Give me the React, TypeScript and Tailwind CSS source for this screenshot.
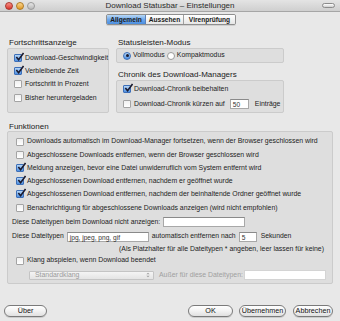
import React from 'react';

const font = { fontFamily: '"Liberation Sans", Arial, sans-serif' };

function Check({ on }: { on?: boolean }) {
  return on ? (
    <span className="relative w-[8px] h-[8px] shrink-0 rounded-[1px] border border-[#3d6fb8] bg-gradient-to-b from-[#b5d6f7] to-[#4c8ee0]">
      <svg viewBox="0 0 10 10" className="absolute -top-[3px] left-0 w-[9px] h-[9px]">
        <path d="M1.5 5.5 L4 8.5 L9.5 1" fill="none" stroke="#1a1a2e" strokeWidth="1.8" />
      </svg>
    </span>
  ) : (
    <span className="w-[8px] h-[8px] shrink-0 rounded-[1px] border border-[#a4a4a4] bg-gradient-to-b from-[#f0f0f0] to-white" />
  );
}

function Row({ on, children }: { on?: boolean; children: React.ReactNode }) {
  return (
    <div className="flex items-center gap-[3px] h-[13.4px] text-[6.9px] text-[#222] whitespace-nowrap">
      <Check on={on} />
      <span>{children}</span>
    </div>
  );
}

function Field({ w, value }: { w: string; value?: string }) {
  return (
    <span className={`${w} h-[10px] bg-white border border-[#a8a8a8] border-t-[#8a8a8a] text-[6.6px] leading-[9px] px-[2px] text-[#333]`}>{value}</span>
  );
}

function Btn({ w, children }: { w: string; children: React.ReactNode }) {
  return (
    <div className={`${w} h-[12px] rounded-full border border-[#7a7a7a] bg-gradient-to-b from-white via-[#f2f2f2] to-[#e0e0e0] flex items-center justify-center text-[7.2px] text-[#111] shadow-[0_1px_0_rgba(0,0,0,0.12)]`}>
      {children}
    </div>
  );
}

export default function App() {
  return (
    <div className="w-[340px] h-[321px] bg-[#e8e8e8] flex flex-col overflow-hidden" style={font}>
      {/* title bar */}
      <div className="relative h-[12px] bg-gradient-to-b from-[#e4e4e4] to-[#cfcfcf] border-b border-[#a6a6a6] flex items-center justify-center">
        <div className="absolute left-[5px] top-[2px] flex gap-[3px]">
          <span className="w-[8px] h-[8px] rounded-full bg-gradient-to-b from-[#f98f86] to-[#d8302b] border border-[#a8382f]" />
          <span className="w-[8px] h-[8px] rounded-full bg-gradient-to-b from-[#fbd68a] to-[#e09a1e] border border-[#b07a22]" />
          <span className="w-[8px] h-[8px] rounded-full bg-gradient-to-b from-[#e8e8e8] to-[#b8b8b8] border border-[#9a9a9a]" />
        </div>
        <span className="text-[8px] leading-[10px] text-[#2a2a2a]">Download Statusbar – Einstellungen</span>
        <span className="absolute right-[5px] top-[3px] w-[13px] h-[5px] rounded-full border border-[#8c8c8c] bg-gradient-to-b from-white to-[#cfcfcf]" />
      </div>

      {/* tabs */}
      <div className="flex justify-center mt-[2px] pl-[2px]">
        <div className="flex h-[11px] rounded-[2px] border border-[#8f8f8f] overflow-hidden text-[6.6px] font-bold text-[#1a1a1a] shadow-[0_1px_0_rgba(0,0,0,0.1)]">
          <span className="w-[39px] flex items-center justify-center bg-gradient-to-b from-[#b8d8f6] via-[#6fa8ea] to-[#4a8ee0] border-r border-[#5a7fb8]">Allgemein</span>
          <span className="w-[38px] flex items-center justify-center bg-gradient-to-b from-white to-[#e6e6e6] border-r border-[#a0a0a0]">Aussehen</span>
          <span className="w-[51px] flex items-center justify-center bg-gradient-to-b from-white to-[#e6e6e6]">Virenprüfung</span>
        </div>
      </div>

      {/* top columns */}
      <div className="flex gap-[7px] mt-[12px] pl-[7px]">
        <div className="w-[102px] flex flex-col">
          <div className="h-[11px] pl-[2px] text-[8px] text-[#1a1a1a] leading-[11px]">Fortschrittsanzeige</div>
          <div className="h-[65px] rounded-[2px] border border-[#cbcbcb] bg-[#dedede] pt-[2px] pl-[6px]">
            <Row on>Download-Geschwindigkeit</Row>
            <Row on>Verbleibende Zeit</Row>
            <Row>Fortschritt in Prozent</Row>
            <Row>Bisher heruntergeladen</Row>
          </div>
        </div>
        <div className="w-[168px] flex flex-col">
          <div className="h-[11px] pl-[2px] text-[8px] text-[#1a1a1a] leading-[11px]">Statusleisten-Modus</div>
          <div className="h-[15px] rounded-[2px] border border-[#cbcbcb] bg-[#dedede] pl-[6px] flex items-center gap-[2px] text-[6.9px] text-[#222]">
            <span className="w-[8px] h-[8px] rounded-full border border-[#3d6fb8] bg-gradient-to-b from-[#b5d6f7] to-[#4c8ee0] flex items-center justify-center">
              <span className="w-[3px] h-[3px] rounded-full bg-[#1a1a2e]" />
            </span>
            <span>Vollmodus</span>
            <span className="w-[8px] h-[8px] rounded-full border border-[#9a9a9a] bg-white" />
            <span>Kompaktmodus</span>
          </div>
          <div className="h-[11px] mt-[6px] pl-[2px] text-[8px] text-[#1a1a1a] leading-[11px]">Chronik des Download-Managers</div>
          <div className="h-[33px] rounded-[2px] border border-[#cbcbcb] bg-[#dedede] pl-[6px] pt-[2px] flex flex-col">
            <Row on>Download-Chronik beibehalten</Row>
            <div className="flex items-center gap-[3px] h-[17px] text-[6.9px] text-[#222]">
              <Check />
              <span>Download-Chronik kürzen auf</span>
              <Field w="w-[19px] ml-[2px]" value="50" />
              <span className="ml-[3px]">Einträge</span>
            </div>
          </div>
        </div>
      </div>

      {/* Funktionen */}
      <div className="mt-[9px] pl-[7px] pr-[7px] flex flex-col">
        <div className="h-[9px] pl-[2px] text-[8px] text-[#1a1a1a] leading-[9px]">Funktionen</div>
        <div className="h-[153px] rounded-[2px] border border-[#cbcbcb] bg-[#dedede] pt-[3px] pl-[8px] pr-[6px] flex flex-col">
          <Row>Downloads automatisch im Download-Manager fortsetzen, wenn der Browser geschlossen wird</Row>
          <Row>Abgeschlossene Downloads entfernen, wenn der Browser geschlossen wird</Row>
          <Row on>Meldung anzeigen, bevor eine Datei unwiderruflich vom System entfernt wird</Row>
          <Row on>Abgeschlossenen Download entfernen, nachdem er geöffnet wurde</Row>
          <Row on>Abgeschlossenen Download entfernen, nachdem der beinhaltende Ordner geöffnet wurde</Row>
          <Row>Benachrichtigung für abgeschlossene Downloads anzeigen (wird nicht empfohlen)</Row>
          <div className="flex items-center gap-[3px] h-[15px] -ml-[4px] text-[6.8px] text-[#222] whitespace-nowrap">
            <span>Diese Dateitypen beim Download nicht anzeigen:</span>
            <Field w="w-[82px]" />
          </div>
          <div className="flex items-center h-[15px] -ml-[4px] text-[6.8px] text-[#222] whitespace-nowrap">
            <span>Diese Dateitypen</span>
            <Field w="w-[82px] ml-[3px]" value="jpg, jpeg, png, gif" />
            <span className="ml-[3px]">automatisch entfernen nach</span>
            <Field w="w-[18px] ml-[3px]" value="5" />
            <span className="ml-[4px]">Sekunden</span>
          </div>
          <div className="h-[10px] flex items-center justify-end pr-[2px] text-[6.9px] text-[#222] whitespace-nowrap">
            (Als Platzhalter für alle Dateitypen * angeben, leer lassen für keine)
          </div>
          <Row>Klang abspielen, wenn Download beendet</Row>
          <div className="flex items-center h-[16px] pl-[13px] text-[6.9px] whitespace-nowrap">
            <div className="w-[125px] shrink-0 h-[9px] border border-[#c4c4c4] rounded-[1px] bg-gradient-to-b from-[#f4f4f4] to-[#e4e4e4] flex items-center justify-between pl-[5px] pr-[3px] text-[#9a9a9a]">
              <span>Standardklang</span>
              <svg viewBox="0 0 6 8" className="w-[4px] h-[6px]">
                <path d="M0.5 3 L3 0.5 L5.5 3 Z M0.5 5 L3 7.5 L5.5 5 Z" fill="#a0a0a0" />
              </svg>
            </div>
            <span className="ml-[5px] text-[#a0a0a0]">Außer für diese Dateitypen:</span>
            <span className="ml-auto w-[82px] shrink-0 h-[10px] bg-white border border-[#d4d4d4]" />
          </div>
        </div>
      </div>

      {/* buttons */}
      <div className="mt-[21px] px-[4px] flex items-center">
        <Btn w="w-[43px]">Über</Btn>
        <div className="flex-1" />
        <Btn w="w-[45px]">OK</Btn>
        <div className="w-[6px]" />
        <Btn w="w-[47px]">Übernehmen</Btn>
        <div className="w-[7px]" />
        <Btn w="w-[40px]">Abbrechen</Btn>
        <div className="w-[3px]" />
      </div>
    </div>
  );
}
